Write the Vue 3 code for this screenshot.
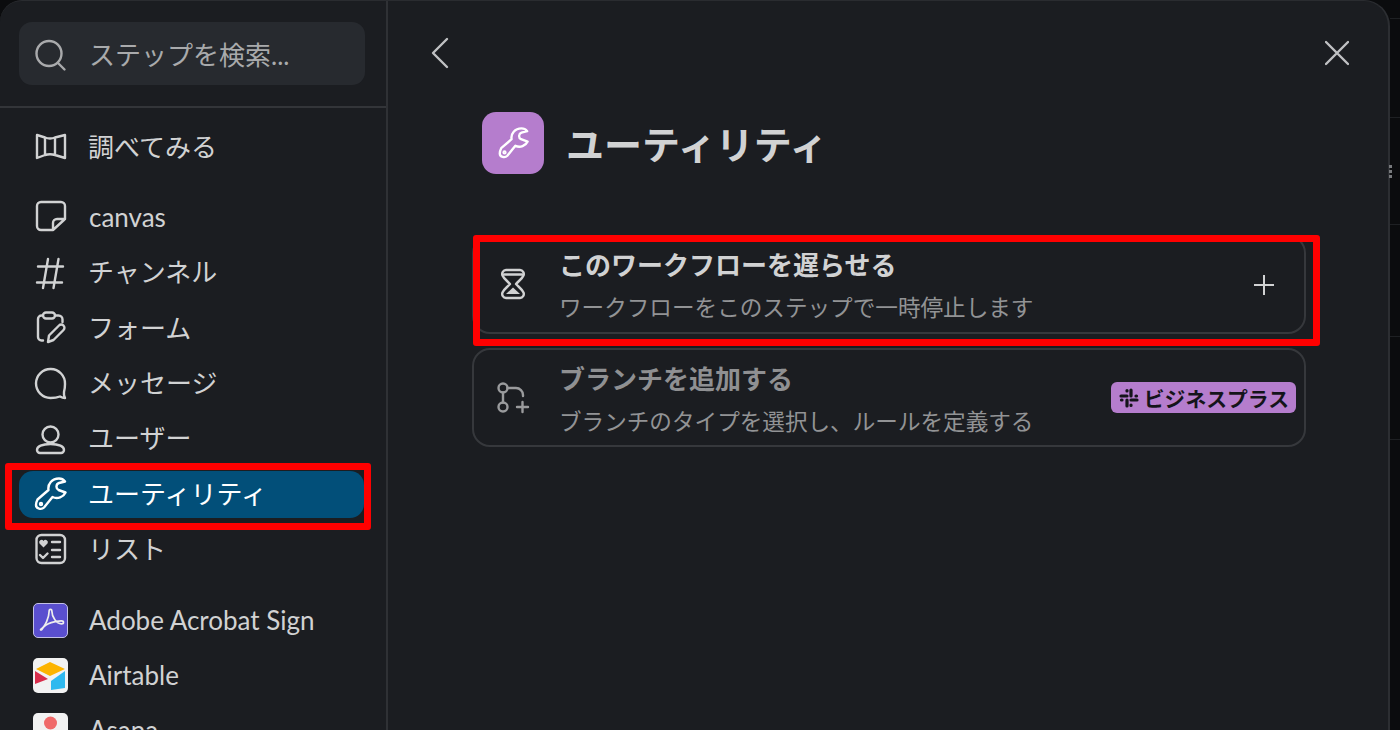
<template>
  <div class="stage">
    <div class="panel">
      <aside class="sidebar">
        <div class="search-wrap">
          <div class="search">
            <svg class="ico" viewBox="0 0 36 36"><circle cx="17" cy="17.5" r="12.5" /><path d="M26 27l6.5 6.5" /></svg>
            <span>ステップを検索...</span>
          </div>
        </div>
        <div class="nav">
          <div class="nav-group">
            <div class="nav-item">
              <svg class="ico" viewBox="0 0 36 36"><path d="M5 6l8 2.500q5 2 10 0L33 6v23l-10-3q-5-1.500-10 0L5 29zM13 8.500V26M23 8.500V26" /></svg>
              <span>調べてみる</span>
            </div>
          </div>
          <div class="nav-group">
            <div class="nav-item">
              <svg class="ico" viewBox="0 0 36 36"><path d="M9 3h20a4 4 0 0 1 4 4v13L21 31H9a4 4 0 0 1-4-4V7a4 4 0 0 1 4-4zM33 20h-8a4 4 0 0 0-4 4v7" /></svg>
              <span class="latin">canvas</span>
            </div>
            <div class="nav-item">
              <svg class="ico" viewBox="0 0 36 36"><path d="M16 4l-5 29M26.500 4l-5 29M6 11.500h25M5 27.500h25" /></svg>
              <span>チャンネル</span>
            </div>
            <div class="nav-item">
              <svg class="ico" viewBox="0 0 36 36"><path d="M11 5.500H9.500A3.500 3.500 0 0 0 6 9v18a3.500 3.500 0 0 0 3.500 3.500H11M23 5.500h3.500a4 4 0 0 1 4 4V12" /><rect x="11" y="2.500" width="12" height="6" rx="3" /><path d="M16 32l1-6.500 10-10a2.700 2.700 0 0 1 4.500 4.500l-10 10z" /></svg>
              <span>フォーム</span>
            </div>
            <div class="nav-item">
              <svg class="ico" viewBox="0 0 36 36"><path d="M18.500 32c4 0 7-.5 9.500-1.500q2.500 1.500 5 1.500-1.500-3-1-6 1-3.500 1-8A14.500 14.500 0 1 0 18.500 32z" /></svg>
              <span>メッセージ</span>
            </div>
            <div class="nav-item">
              <svg class="ico" viewBox="0 0 36 36"><circle cx="18.500" cy="13.500" r="8" /><path d="M5 29c0-3.500 5-6 13.500-6S32 25.500 32 29a3 3 0 0 1-3 3H8a3 3 0 0 1-3-3z" /></svg>
              <span>ユーザー</span>
            </div>
            <div class="nav-item active">
              <svg class="ico" viewBox="0 0 36 36"><path d="M5.500 23.500l11-9.500C15.500 8 20 2.500 27 2.500c2.500 0 4.500 1 6 3l-6 1.500c-3 1-3.500 5.500-.5 7l7 2.500c-2 4.500-8 7-13 4.500L12 31.500c-2.500 2.500-8 1.500-8-2.500 0-2 .5-3.500 1.500-5.500z" /><circle cx="9" cy="28" r="1" /></svg>
              <span>ユーティリティ</span>
              <div class="annot"></div>
            </div>
            <div class="nav-item">
              <svg class="ico" viewBox="0 0 36 36"><rect x="4.500" y="3" width="28.500" height="28" rx="5" /><path d="M20 10h8M20 18h8M20 25h8M8 23l3 3 4.500-4.500" /><path class="solid" d="M11.500 15.500l-4-4a2.300 2.300 0 0 1 4-2.500 2.300 2.300 0 0 1 4 2.500z" /></svg>
              <span>リスト</span>
            </div>
          </div>
          <div class="nav-group">
            <div class="nav-item">
              <div class="brand adobe">
                <svg viewBox="0 0 35 35"><path d="M7 27c5-3 9-13 9-19 0-3 3-3 3 0 0 6 5 13 10 13 3 0 3-3 0-3-6 0-16 2-20 8-1 2-2 2-2 1z" /></svg>
              </div>
              <span class="latin">Adobe Acrobat Sign</span>
            </div>
            <div class="nav-item">
              <div class="brand">
                <svg viewBox="0 0 35 35">
                  <path fill="#fcb400" d="M17 4l15 7-15 7-14-7z" />
                  <path fill="#d92d4c" d="M2 13l13 8-13 5z" />
                  <path fill="#2fb9ef" d="M18 23l14-10v17l-14 2z" />
                </svg>
              </div>
              <span class="latin">Airtable</span>
            </div>
            <div class="nav-item">
              <div class="brand">
                <svg viewBox="0 0 35 35">
                  <circle cx="17.500" cy="10" r="6.500" fill="#f06a6a" />
                  <circle cx="9" cy="24" r="6.500" fill="#f06a6a" />
                  <circle cx="26" cy="24" r="6.500" fill="#f06a6a" />
                </svg>
              </div>
              <span class="latin">Asana</span>
            </div>
          </div>
        </div>
      </aside>

      <main class="main">
        <div class="topbar">
          <svg class="top-ico" viewBox="0 0 24 32"><path d="M19 2L5 16l14 14" /></svg>
          <svg class="top-ico" viewBox="0 0 24 32"><path d="M1 5l22 22M23 5L1 27" /></svg>
        </div>
        <div class="content">
          <div class="title-row">
            <div class="title-icon">
              <svg viewBox="0 0 36 36"><path d="M5.500 23.500l11-9.500C15.500 8 20 2.500 27 2.500c2.500 0 4.500 1 6 3l-6 1.500c-3 1-3.500 5.500-.5 7l7 2.500c-2 4.500-8 7-13 4.500L12 31.500c-2.500 2.500-8 1.500-8-2.500 0-2 .5-3.500 1.500-5.500z" /><circle cx="9" cy="28" r="1" /></svg>
            </div>
            <h1>ユーティリティ</h1>
          </div>
          <div class="cards">
            <div class="card">
              <svg class="ico" viewBox="0 0 36 36"><path d="M11 3h14a4 4 0 0 1 3.500 5.500c-1.500 3.500-5 5.500-7.500 8.500 2.500 3 6 5 7.500 8.500A4 4 0 0 1 25 31H11a4 4 0 0 1-3.500-5.500C9 22 12.500 20 15 17c-2.500-3-6-5-7.500-8.500A4 4 0 0 1 11 3z" /><path d="M9 7.500h18" /><path class="solid" d="M18 20.500l7 6.500H11z" /></svg>
              <div class="card-text">
                <div class="card-title">このワークフローを遅らせる</div>
                <div class="card-sub">ワークフローをこのステップで一時停止します</div>
              </div>
              <svg class="plus" viewBox="0 0 20 20"><path d="M10 0v20M0 10h20" /></svg>
              <div class="annot"></div>
            </div>
            <div class="card disabled">
              <svg class="ico" viewBox="0 0 36 36"><circle cx="8" cy="8" r="4.500" /><circle cx="8" cy="27" r="4.500" /><path d="M8 12.500v10M12.500 8H21a7 7 0 0 1 7 7v1M22 27h11M27.500 22v10" /></svg>
              <div class="card-text">
                <div class="card-title">ブランチを追加する</div>
                <div class="card-sub">ブランチのタイプを選択し、ルールを定義する</div>
              </div>
              <div class="badge">
                <svg viewBox="0 0 20 20"><path d="M2 8H8M8 2.500V3M12 2V8M17.500 8H17M18 12H12M12 17.500V17M8 18V12M2.500 12H3" /></svg>
                <span>ビジネスプラス</span>
              </div>
            </div>
          </div>
        </div>
      </main>
    </div>
    <div class="behind">
      <div v-for="h in rows" :key="h" class="behind-row" :style="{ height: h + 'px' }"></div>
      <div class="grip">
        <i></i><i></i><i></i>
      </div>
    </div>
  </div>
</template>

<script setup>
const rows = [19, 99, 107, 112, 103]
</script>

<style>
html, body {
  background: #0b0c0e;
}
</style>

<style scoped>
.stage {
  position: relative;
  display: flex;
  width: 1400px;
  height: 730px;
  overflow: hidden;
  background: #0b0c0e;
  font-family: Lato, "Noto Sans CJK JP", sans-serif;
  font-size: 26px;
  color: #d1d2d3;
}

.panel {
  display: flex;
  flex: none;
  width: 1390px;
  height: 731px;
  background: #1b1d21;
  border-top: 1px solid #2a2c30;
  border-right: 2px solid #2c2e32;
  border-radius: 22px 26px 0 0;
  box-sizing: border-box;
  overflow: hidden;
}

.behind {
  position: relative;
  flex: 1;
}

.behind-row {
  border-bottom: 1px solid #1e2023;
  box-sizing: border-box;
}

.grip {
  position: absolute;
  top: 165px;
  left: -1px;
  display: flex;
  flex-direction: column;
  gap: 2px;
}

.grip i {
  width: 3px;
  height: 3px;
  background: #77797c;
}

.sidebar {
  flex: none;
  width: 388px;
  border-right: 2px solid #2f3135;
  box-sizing: border-box;
}

.search-wrap {
  height: 107px;
  padding: 21px 21px 0 19px;
  border-bottom: 2px solid #333539;
  box-sizing: border-box;
}

.search {
  display: flex;
  align-items: center;
  gap: 21px;
  height: 63px;
  padding-left: 13px;
  background: #272a2f;
  border-radius: 13px;
  color: #a9aaac;
}

.search span {
  margin-top: -1px;
}

.ico {
  flex: none;
  width: 36px;
  height: 36px;
  fill: none;
  stroke: currentColor;
  stroke-width: 2.400;
  stroke-linecap: round;
  stroke-linejoin: round;
}

.ico .solid {
  fill: currentColor;
  stroke: none;
}

.nav {
  padding-top: 15.500px;
}

.nav-group {
  display: flex;
  flex-direction: column;
  gap: 8.400px;
}

.nav-group + .nav-group {
  margin-top: 23.400px;
}

.nav-item {
  position: relative;
  display: flex;
  align-items: center;
  gap: 21px;
  height: 47px;
  margin: 0 22px 0 19px;
  padding-left: 13px;
  border-radius: 14px;
  white-space: nowrap;
}

.nav-item > span {
  margin-top: -4px;
  margin-left: -1px;
}

.nav-item > span.latin {
  margin-top: -1px;
  margin-left: 0;
}

.nav-item.active {
  background: #024f79;
  color: #fff;
}

.annot {
  position: absolute;
  border: 7px solid #f00;
  border-radius: 3px;
  box-sizing: border-box;
  pointer-events: none;
}

.nav-item .annot {
  top: -8px;
  left: -14px;
  right: -7px;
  bottom: -12px;
}

.brand {
  flex: none;
  width: 35px;
  height: 35px;
  margin-left: 1px;
  background: #f2f2f2;
  border-radius: 5px;
  overflow: hidden;
}

.brand svg {
  display: block;
  width: 35px;
  height: 35px;
}

.brand.adobe {
  background: #5a4fcf;
  border: 1px solid #c3c0e6;
  box-sizing: border-box;
}

.brand.adobe svg {
  width: 33px;
  height: 33px;
  fill: none;
  stroke: #eee;
  stroke-width: 1.800;
  stroke-linejoin: round;
}

.main {
  flex: 1;
  min-width: 0;
}

.topbar {
  display: flex;
  align-items: center;
  justify-content: space-between;
  height: 111px;
  padding: 0 39px 8px 40px;
  box-sizing: border-box;
}

.top-ico {
  width: 24px;
  height: 32px;
  fill: none;
  stroke: #c0c1c3;
  stroke-width: 2.400;
  stroke-linecap: round;
  stroke-linejoin: round;
}

.content {
  padding-left: 84px;
  width: 834px;
  box-sizing: content-box;
}

.title-row {
  display: flex;
  align-items: center;
  gap: 23px;
  height: 62px;
  margin-bottom: 61px;
  padding-left: 10px;
}

.title-icon {
  display: flex;
  align-items: center;
  justify-content: center;
  width: 62px;
  height: 62px;
  background: #b57dcd;
  border-radius: 14px;
}

.title-icon svg {
  width: 34px;
  height: 34px;
  fill: none;
  stroke: #fff;
  stroke-width: 2.500;
  stroke-linejoin: round;
}

h1 {
  margin: -2px 0 0 -1px;
  font-size: 38px;
  font-weight: 700;
  color: #d1d2d3;
}

.cards {
  display: flex;
  flex-direction: column;
  gap: 14px;
}

.card {
  position: relative;
  display: flex;
  align-items: center;
  gap: 28px;
  height: 99px;
  padding: 0 30px 0 21px;
  border: 2px solid #36383c;
  border-radius: 18px;
  box-sizing: border-box;
}

.card .annot {
  top: -2px;
  left: -1px;
  right: -16px;
  bottom: -14px;
}

.card-text {
  flex: 1;
  min-width: 0;
  margin-top: 1px;
}

.disabled .card-text {
  margin-top: 3px;
}

.card-title {
  font-weight: 700;
  line-height: 38px;
  color: #d1d2d3;
}

.card-sub {
  margin-top: 7px;
  font-size: 22.600px;
  line-height: 34px;
  color: #929395;
}

.disabled .ico {
  color: #9a9b9d;
}

.disabled .card-title {
  color: #8f9092;
}

.plus {
  flex: none;
  width: 20px;
  height: 20px;
  fill: none;
  stroke: #d1d2d3;
  stroke-width: 2;
}

.badge {
  display: flex;
  align-items: center;
  gap: 5px;
  height: 31px;
  margin-right: -22px;
  padding: 0 7px 0 8px;
  background: #b57dcd;
  border-radius: 6px;
  color: #14141a;
  font-size: 20.800px;
  font-weight: 700;
  white-space: nowrap;
}

.badge svg {
  width: 20px;
  height: 20px;
  fill: none;
  stroke: #14141a;
  stroke-width: 3.200;
  stroke-linecap: round;
}
</style>
